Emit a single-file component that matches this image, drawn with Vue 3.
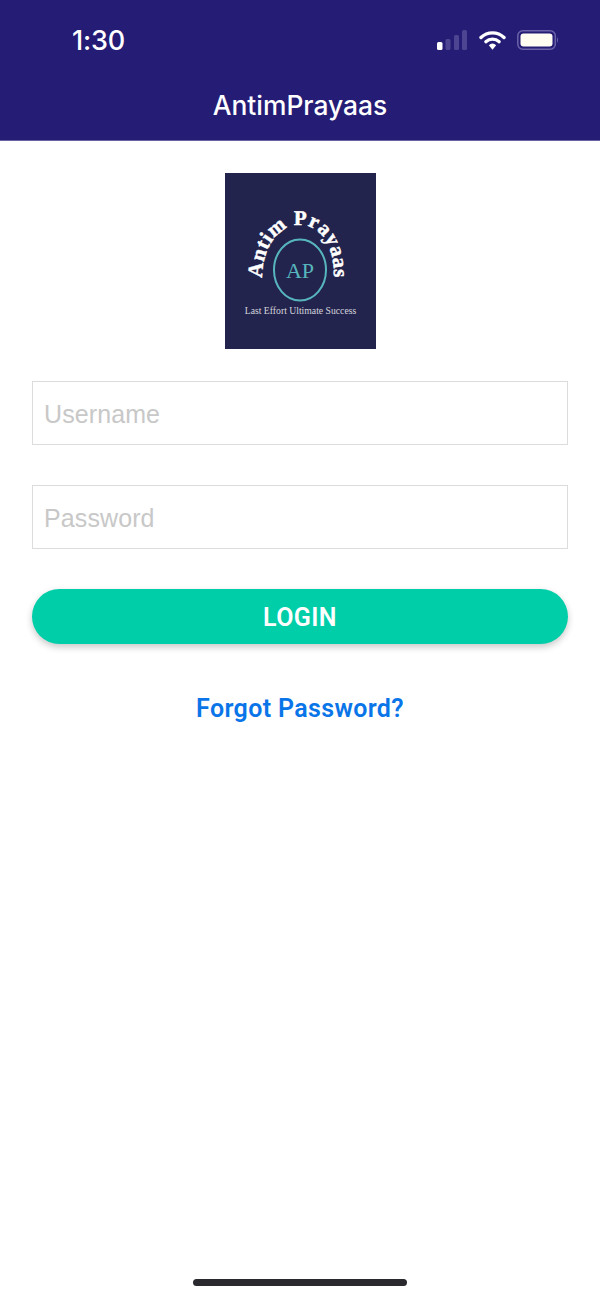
<template>
  <div class="page">
    <header class="topbar">
      <div class="status">
        <span class="time">1:30</span>
        <div class="status-icons">
          <svg width="31" height="20" viewBox="0 0 31 20">
            <rect x="0" y="12" width="5.500" height="8" rx="1.5" fill="#fff" />
            <rect x="8.5" y="9" width="5" height="11" rx="1.5" fill="#4d4592" />
            <rect x="17" y="5" width="5" height="15" rx="1.5" fill="#4d4592" />
            <rect x="25" y="0" width="5" height="20" rx="1.5" fill="#4d4592" />
          </svg>
          <svg class="wifi" width="27" height="20" viewBox="0 0 27 20">
            <path d="M2 7.500 A16.500 16.500 0 0 1 25 7.500" fill="none" stroke="#fff" stroke-width="3.400" stroke-linecap="round" />
            <path d="M6.800 11.800 A10 10 0 0 1 20.200 11.800" fill="none" stroke="#fff" stroke-width="3.200" stroke-linecap="round" />
            <path d="M9.800 15.200 Q13.500 12 17.200 15.200 L13.500 19.800 Z" fill="#fff" />
          </svg>
          <svg class="battery" width="42" height="20" viewBox="0 0 42 20">
            <rect x="0.800" y="0.800" width="37.500" height="18.400" rx="5" fill="none" stroke="#6a63a8" stroke-width="1.500" />
            <rect x="3.500" y="3.500" width="32" height="13" rx="3" fill="#fffdf2" />
            <path d="M40 7 Q42 10 40 13 Z" fill="#6a63a8" />
          </svg>
        </div>
      </div>
      <h1 class="title">AntimPrayaas</h1>
    </header>

    <main class="content">
      <svg class="logo" width="151" height="176" viewBox="0 0 151 176">
        <rect width="151" height="176" fill="#23244e" />
        <defs>
          <path id="arc" d="M38 118 C33 78 52 52 75 52 C98 52 113 78 108 118" />
        </defs>
        <text class="arc-text">
          <textPath href="#arc" startOffset="50%" text-anchor="middle">Antim Prayaas</textPath>
        </text>
        <ellipse cx="75" cy="97" rx="26" ry="30.500" fill="none" stroke="#57b6bd" stroke-width="2" />
        <text class="ap" x="75" y="105" text-anchor="middle">AP</text>
        <text class="tagline" x="75.500" y="141" text-anchor="middle">Last Effort Ultimate Success</text>
      </svg>

      <form class="form" @submit.prevent>
        <input class="field" type="text" placeholder="Username" />
        <input class="field" type="password" placeholder="Password" />
        <button class="login" type="submit">LOGIN</button>
      </form>

      <a class="forgot" href="#">Forgot Password?</a>
    </main>

    <div class="home-indicator"></div>
  </div>
</template>

<script setup>
</script>

<style scoped>
.page {
  width: 600px;
  height: 1299px;
  display: flex;
  flex-direction: column;
  background: #fff;
  overflow: hidden;
}
.topbar {
  height: 141px;
  box-sizing: border-box;
  background: #241c75;
  border-bottom: 1px solid #6a64a3;
  color: #fff;
  font-family: Inter, "Liberation Sans", sans-serif;
}
.status {
  height: 80px;
  box-sizing: border-box;
  padding: 0 41px 0 72px;
  display: flex;
  align-items: center;
  justify-content: space-between;
}
.time {
  font-size: 27px;
  font-weight: 500;
  letter-spacing: -0.2px;
}
.status-icons {
  display: flex;
  align-items: center;
}
.wifi {
  margin-left: 11px;
}
.battery {
  margin-left: 11px;
}
.title {
  margin: 0;
  text-align: center;
  font-size: 26.400px;
  line-height: 51px;
  font-weight: 500;
}
.content {
  display: flex;
  flex-direction: column;
  align-items: center;
  padding: 32px 32px 0;
}
.logo {
  display: block;
}
.arc-text {
  font-family: "Liberation Serif", serif;
  font-size: 21px;
  font-weight: 700;
  letter-spacing: 0.6px;
  fill: #fff;
  stroke: #fff;
  stroke-width: 0.5px;
}
.ap {
  font-family: "Liberation Serif", serif;
  font-size: 22px;
  fill: #57b6bd;
}
.tagline {
  font-family: "Liberation Serif", serif;
  font-size: 9.700px;
  fill: #d5d5dc;
}
.form {
  width: 100%;
  margin-top: 32px;
  display: flex;
  flex-direction: column;
  gap: 40px;
}
.field {
  height: 64px;
  box-sizing: border-box;
  padding: 2px 11px 0;
  border: 1px solid #dcdcdc;
  border-radius: 0;
  outline: none;
  background: #fff;
  font-family: "Liberation Sans", sans-serif;
  font-size: 25px;
  letter-spacing: 0.1px;
}
.field::placeholder {
  color: #c8c8c8;
  opacity: 1;
}
.login {
  height: 55px;
  padding-top: 2px;
  border: none;
  border-radius: 28px;
  background: #00cea9;
  color: #fff;
  font-family: Roboto, "Liberation Sans", sans-serif;
  font-size: 25px;
  font-weight: 600;
  letter-spacing: 0.4px;
  box-shadow: 0 3px 7px rgba(0, 0, 0, 0.22);
}
.forgot {
  margin-top: 49px;
  color: #0a75e8;
  font-family: Roboto, "Liberation Sans", sans-serif;
  font-size: 25px;
  line-height: 32px;
  font-weight: 600;
  letter-spacing: 0.35px;
  text-decoration: none;
}
.home-indicator {
  width: 214px;
  height: 7px;
  margin: auto auto 13px;
  border-radius: 4px;
  background: #2a2a2e;
}
</style>
